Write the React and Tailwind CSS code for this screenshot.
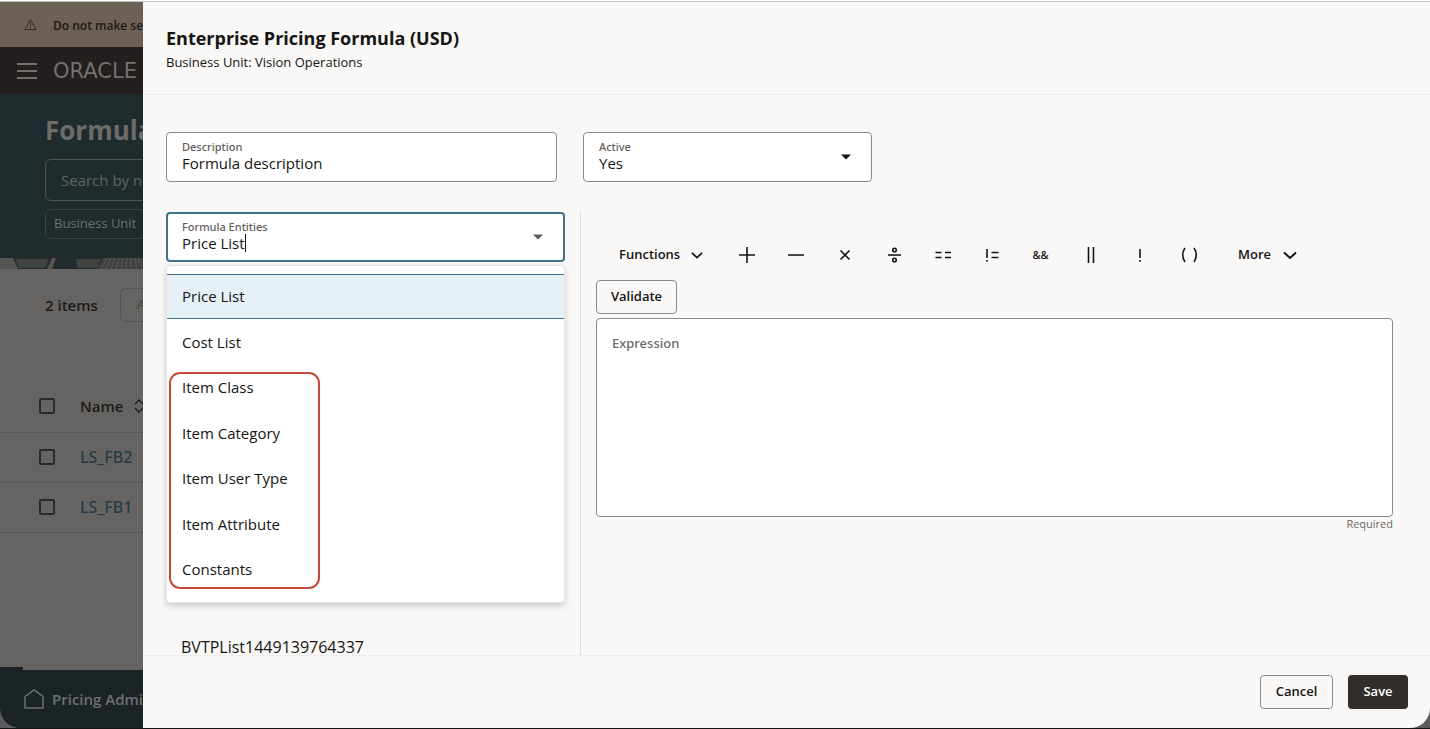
import { useState } from "react"

const ENTITIES = [
    'Price List',
    'Cost List',
    'Item Class',
    'Item Category',
    'Item User Type',
    'Item Attribute',
    'Constants',
]

const FORMULAS = ['LS_FB2', 'LS_FB1']

export default function App() {
    return <div className="flex h-screen flex-col overflow-hidden border-t border-white bg-[#5c5c5c] font-['Open_Sans','Noto_Sans',sans-serif] text-[#161513]">
        <div className="flex min-h-0 flex-1 overflow-hidden rounded-b-[20px] border-t border-[#c4c4c0]">
            <FormulasPage />
            <Drawer />
        </div>
        <div className="h-px shrink-0 bg-[#161513]"></div>
    </div>
}

function FormulasPage() {
    return <div className="flex w-[143px] shrink-0 flex-col overflow-hidden whitespace-nowrap bg-[#666462]">
        <div className="flex h-[45px] shrink-0 items-center gap-4 bg-[#6c6154] pl-6">
            <WarningIcon />
            <p className="pt-[2px] text-xs font-semibold text-[#1c1a19]">Do not make sensitive</p>
        </div>

        <header className="flex h-[47px] shrink-0 items-center gap-4 bg-[#231f1e] pl-[17px]">
            <button aria-label="Menu" className="flex w-5 shrink-0 flex-col gap-[5px]">
                <span className="h-[2px] bg-[#73706e]"></span>
                <span className="h-[2px] bg-[#73706e]"></span>
                <span className="h-[2px] bg-[#73706e]"></span>
            </button>
            <span className="pt-[2px] font-['DejaVu_Sans',sans-serif] text-[21px] text-[#73706e]">ORACLE</span>
        </header>

        <section className="flex h-[164px] shrink-0 flex-col items-start bg-[#202b2e] pl-[45px] pt-5">
            <h1 className="text-[26px] leading-8 font-bold text-[#6c6c6b]">Formulas</h1>
            <input aria-label="Search" placeholder="Search by name" className="mt-[13px] h-[42px] w-72 shrink-0 rounded-md border border-[#4d5557] pl-[15px] text-[15px] text-[#6c6c6b] placeholder:text-[#5c6364]" />
            <button className="mt-2 h-[30px] rounded-md border border-[#384144] px-2 text-[13px] font-medium text-[#6c6f6f]">Business Unit</button>
        </section>
        <Pattern />

        <section className="min-h-0 flex-1 overflow-hidden">
            <div className="mt-[19px] flex items-center gap-[22px] pl-[45px]">
                <h2 className="text-[15px] font-semibold text-[#1d1b1a]">2 items</h2>
                <button className="h-[34px] rounded-md border border-[#555351] px-4 text-[13px] font-semibold text-[#4a4846]">Actions</button>
            </div>

            <table className="mt-[59px] w-96 text-left">
                <thead>
                    <tr className="h-[51px] border-b border-[#5a5856]">
                        <th className="w-20 pl-[39px]"><Check label="Select all" /></th>
                        <th className="text-[15px] font-semibold text-[#1d1b1a]">
                            <span className="flex items-center gap-[10px]">Name <SortIcon /></span>
                        </th>
                    </tr>
                </thead>
                <tbody>
                    {FORMULAS.map((name) => {
                        return <tr key={name} className="h-[50px] border-b border-[#5a5856]">
                            <td className="w-20 pl-[39px]"><Check label={name} /></td>
                            <td className="font-['Noto_Sans',sans-serif] text-base font-medium"><a href="#" className="text-[#263b47]">{name}</a></td>
                        </tr>
                    })}
                </tbody>
            </table>
        </section>

        <div className="h-[3px] w-[23px] shrink-0 bg-[#1b2327]"></div>
        <footer className="flex h-[58px] shrink-0 items-center gap-2 bg-[#1b2327] pl-6">
            <HomeIcon />
            <a href="#" className="text-[15px] font-semibold text-[#6d6f70]">Pricing Administration</a>
        </footer>
    </div>
}

function Check({ label }) {
    return <input type="checkbox" aria-label={label} className="block size-4 appearance-none rounded-xs border-2 border-[#2c2a28]" />
}

function Drawer() {
    return <main className="flex min-w-0 flex-1 flex-col bg-[#f9f8f7]">
        <header className="h-[93px] shrink-0 border-b border-[#efeeec] px-[23px] pt-[22px]">
            <h1 className="text-lg leading-7 font-bold">Enterprise Pricing Formula (USD)</h1>
            <p className="text-[13px] leading-5">Business Unit: Vision Operations</p>
        </header>

        <div className="flex min-h-0 flex-1 flex-col overflow-hidden pr-[37px] pl-[23px] pt-[37px]">
            <div className="flex gap-[26px]">
                <Field id="description" label="Description" classnames="w-[391px]">
                    <input id="description" defaultValue="Formula description" className="w-full text-[15px] leading-5 outline-none" />
                </Field>
                <Field id="active" label="Active" classnames="w-[289px]" arrow="text-[#161513]">
                    <select id="active" className="w-full appearance-none text-[15px] leading-5 outline-none">
                        <option>Yes</option>
                        <option>No</option>
                    </select>
                </Field>
            </div>

            <div className="mt-[30px] flex min-h-0 flex-1">
                <Entities />
                <Expression />
            </div>
        </div>

        <footer className="flex h-[73px] shrink-0 items-center justify-end gap-[15px] border-t border-[#efeeec] pr-[22px]">
            <button className="h-[34px] w-[73px] rounded-sm border border-[#8b8a88] text-[13px] font-semibold">Cancel</button>
            <button className="h-[34px] w-[60px] rounded-sm bg-[#312d2a] text-[13px] font-semibold text-white">Save</button>
        </footer>
    </main>
}

function Field({ id, label, children, arrow, classnames }) {
    return <div className={`${classnames} relative flex h-[50px] flex-col justify-center rounded-sm border border-[#8b8a88] bg-white px-[15px]`}>
        <label htmlFor={id} className="font-['Noto_Sans',sans-serif] text-[11px] leading-3 font-medium text-[#5f5d5b]">{label}</label>
        {children}
        {arrow && <Caret classnames={arrow} />}
    </div>
}

function Entities() {
    const [selected, setSelected] = useState('Price List')

    return <section className="w-[415px] shrink-0 border-r border-[#dedddb] pr-[15px]">
        <div className="relative">
            <div className="relative flex h-[50px] flex-col justify-center rounded-sm border-2 border-[#41718b] bg-white px-[14px]">
                <label htmlFor="entities" className="font-['Noto_Sans',sans-serif] text-[11px] leading-3 font-medium text-[#5f5d5b]">Formula Entities</label>
                <div className="flex items-center">
                    <input id="entities" role="combobox" aria-expanded="true" aria-controls="entity-list" value={selected} onChange={(e) => setSelected(e.target.value)} className="field-sizing-content text-[15px] leading-5 outline-none" />
                    <span className="h-[18px] w-px bg-[#161513]"></span>
                </div>
                <Caret classnames="text-[#5f5d5b]" />
            </div>

            <ul id="entity-list" role="listbox" className="absolute inset-x-0 top-full mt-[3px] grid h-[338px] auto-rows-fr rounded-sm border border-[#e6e5e3] bg-white pt-2 pb-[10px] shadow-[0_3px_6px_rgba(0,0,0,0.18)]">
                {ENTITIES.map((name) => {
                    return <li
                        key={name}
                        role="option"
                        aria-selected={name === selected}
                        onClick={() => setSelected(name)}
                        className="flex items-center border-y border-transparent px-[15px] text-[15px] aria-selected:border-[#41718b] aria-selected:bg-[#e6f0f7]"
                    >
                        {name}
                    </li>
                })}
                <div className="pointer-events-none absolute bottom-[13px] left-[2px] h-[217px] w-[151px] rounded-[11px] border-2 border-[#c8493c]"></div>
            </ul>
        </div>

        <p className="mt-[375px] pl-[15px] text-base leading-5">BVTPList1449139764337</p>
    </section>
}

function Expression() {
    return <section className="min-w-0 flex-1 pt-[26px] pl-[15px]">
        <div className="flex h-[34px] items-center">
            <button className="flex w-[126px] items-center gap-[11px] pl-[23px] text-[13px] font-semibold">
                Functions <Chevron classnames="h-3 w-3" />
            </button>
            <Operator label="Add"><path d="M2 10h16M10 2v16" /></Operator>
            <Operator label="Subtract"><path d="M2 10h16" /></Operator>
            <Operator label="Multiply"><path d="M5.500 5.500l9 9M14.500 5.500l-9 9" /></Operator>
            <Operator label="Divide">
                <path d="M4 10h13" />
                <circle cx="10.500" cy="5" r="1.800" />
                <circle cx="10.500" cy="15" r="1.800" />
            </Operator>
            <Operator label="Equals"><path d="M2.500 7.500h6M12 7.500h6M2.500 12.500h6M12 12.500h6" /></Operator>
            <Operator label="Not equals"><path d="M5 4v9M5 15v1.800M9.500 7.500h7M9.500 12.500h7" /></Operator>
            <button className="w-[49px] shrink-0 text-center font-['Noto_Sans',sans-serif] text-[11px] font-medium">&amp;&amp;</button>
            <Operator label="Or"><path d="M8.500 2v16M13.500 2v16" /></Operator>
            <Operator label="Not"><path d="M11 4v9M11 15v1.800" /></Operator>
            <Operator label="Parentheses"><path d="M7 3c-3 4-3 10 0 14M16 3c3 4 3 10 0 14" /></Operator>
            <button className="flex items-center gap-3 pl-[26px] text-[13px] font-semibold">
                More <Chevron classnames="h-[14px] w-[14px]" />
            </button>
        </div>

        <button className="mt-2 block h-[34px] w-[81px] rounded-sm border border-[#8b8a88] text-[13px] font-semibold">Validate</button>
        <textarea aria-label="Expression" placeholder="Expression" className="mt-1 block h-[199px] w-full resize-none rounded-sm border border-[#8b8a88] bg-white px-[15px] py-[14px] font-['Noto_Sans',sans-serif] text-[13px] leading-5 font-medium placeholder:text-[#6b6967]"></textarea>
        <p className="text-right text-[11px] leading-[14px] text-[#6b6967]">Required</p>
    </section>
}

function Operator({ label, children }) {
    return <button aria-label={label} className="flex w-[49px] shrink-0 justify-center">
        <svg viewBox="0 0 20 20" className="size-5 fill-none stroke-[#161513] stroke-[1.6]">{children}</svg>
    </button>
}

function Chevron({ classnames }) {
    return <svg viewBox="0 0 14 14" className={`${classnames} fill-none stroke-[#161513] stroke-2`}>
        <path d="M1 4.500l6 5.500 6-5.500" />
    </svg>
}

function Caret({ classnames }) {
    return <svg viewBox="0 0 10 6" className={`${classnames} pointer-events-none absolute top-1/2 right-5 h-[6px] w-[10px] -translate-y-1/2 fill-current`}>
        <path d="M0 0.500h10L5 5.500z" />
    </svg>
}

function WarningIcon() {
    return <svg viewBox="0 0 14 14" className="size-[13px] shrink-0 fill-none stroke-[#2b2824]">
        <path d="M7 1.500L13 12.500H1zM7 5v4M7 10v1.500" />
    </svg>
}

function SortIcon() {
    return <svg viewBox="0 0 12 14" className="h-[14px] w-3 fill-none stroke-[#1d1b1a] stroke-[1.4]">
        <path d="M2 5l4-4 4 4M2 9l4 4 4-4" />
    </svg>
}

function HomeIcon() {
    return <svg viewBox="0 0 20 20" className="size-5 shrink-0 fill-none stroke-[#6d6f70] stroke-[1.5]">
        <path d="M1 7.500L10 1l9 6.500V19H1z" />
    </svg>
}

function Pattern() {
    return <svg viewBox="0 0 143 11" className="h-[11px] w-[143px] shrink-0 bg-[#232d2f]">
        <path d="M0 0h13l5 11H0z" fill="#565553" />
        <path d="M15 1l4 9h26l4-9zM76 1l2 9h19l4-9z" fill="#3f4342" />
        <path d="M47 11l5-11h4l-4 11z" fill="#5a524c" />
        <path d="M97 11l6-11h40v11z" fill="#3d403f" />
        <path d="M101 11l6-11M106 11l5-11M111 11l4-11M116 11l3-11M121 11l2-11M126 11l1-11M131 11V0M137 11l-2-11M142 9l-4-9" stroke="#525351" strokeWidth="1.500" />
    </svg>
}
